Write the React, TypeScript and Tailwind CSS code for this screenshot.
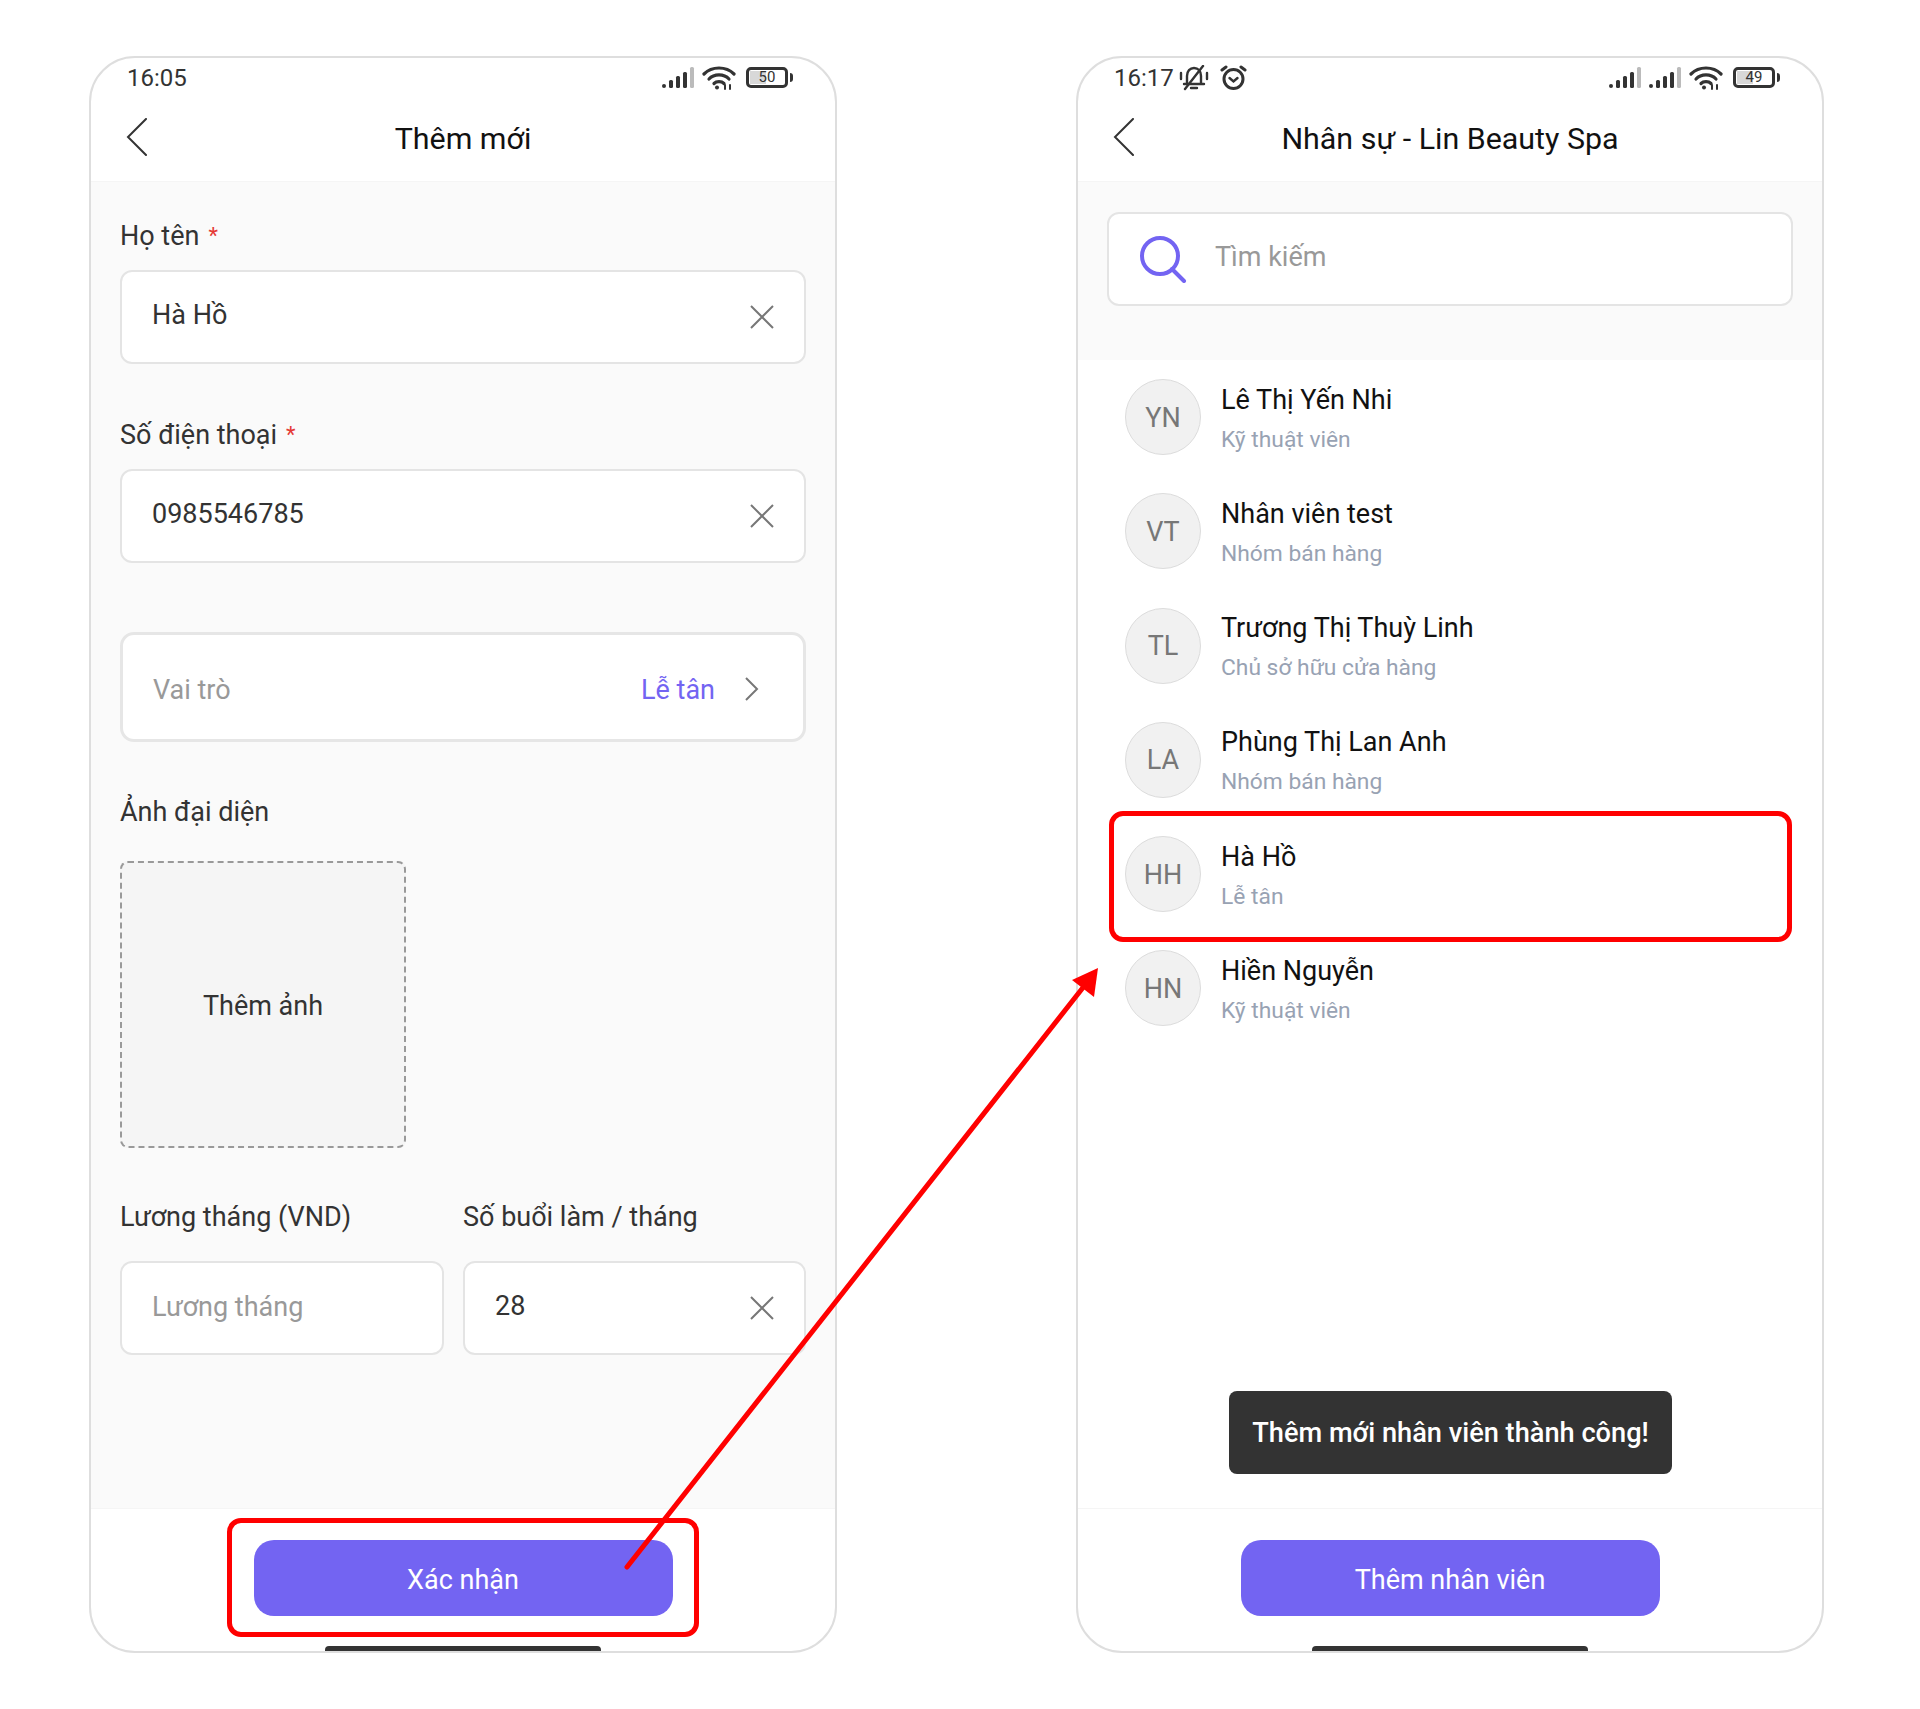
import type { ReactNode } from 'react'

const staff = [
  { code: 'YN', name: 'Lê Thị Yến Nhi', role: 'Kỹ thuật viên' },
  { code: 'VT', name: 'Nhân viên test', role: 'Nhóm bán hàng' },
  { code: 'TL', name: 'Trương Thị Thuỳ Linh', role: 'Chủ sở hữu cửa hàng' },
  { code: 'LA', name: 'Phùng Thị Lan Anh', role: 'Nhóm bán hàng' },
  { code: 'HH', name: 'Hà Hồ', role: 'Lễ tân' },
  { code: 'HN', name: 'Hiền Nguyễn', role: 'Kỹ thuật viên' },
]

function Signal() {
  return (
    <svg width="34" height="22" viewBox="0 0 34 22">
      <rect x="0" y="17" width="4" height="4" rx="2" fill="#333" />
      <rect x="7" y="13" width="4" height="8" rx="1.5" fill="#333" />
      <rect x="14" y="9" width="4" height="12" rx="1.5" fill="#333" />
      <rect x="21" y="5" width="4" height="16" rx="1.5" fill="#333" />
      <rect x="28" y="0" width="4" height="21" rx="1.5" fill="#bbb" />
    </svg>
  )
}

function Wifi() {
  return (
    <svg width="34" height="24" viewBox="0 0 34 24" fill="none" stroke="#333" strokeWidth="3.2" strokeLinecap="round">
      <path d="M2 8 C 10 0, 24 0, 32 8" />
      <path d="M7 13 C 12 7.5, 22 7.5, 27 13" />
      <path d="M12 17.5 C 14.5 15, 19.5 15, 22 17.5" />
      <circle cx="15" cy="21.5" r="2" fill="#333" stroke="none" />
      <path d="M23 23 V19 M28 23 V19" strokeWidth="2" />
    </svg>
  )
}

function Battery({ level }: { level: string }) {
  return (
    <div className="flex items-center">
      <div className="relative w-[42px] h-[21px] rounded-[5px] border-[3px] border-[#333] flex items-center justify-center bg-white">
        <div className="absolute left-[1px] top-[1px] bottom-[1px] w-[16px] bg-[#d8d8d8]" />
        <span className="relative text-[15px] leading-none text-[#333]">{level}</span>
      </div>
      <div className="w-[3px] h-[9px] ml-[2px] rounded-r-sm bg-[#333]" />
    </div>
  )
}

function StatusBar({ time, extras, signals }: { time: string; extras?: ReactNode; signals: number }) {
  return (
    <div className="h-[39px] pl-[36px] pr-[42px] flex items-center justify-between">
      <div className="flex items-center">
        <span className="text-[24px] leading-none text-[#333]">{time}</span>
        {extras}
      </div>
      <div className="flex items-center gap-[10px]">
        <div className="flex items-center gap-[6px]">
          <Signal />
          {signals > 1 && <Signal />}
          <Wifi />
        </div>
        <Battery level={signals > 1 ? '49' : '50'} />
      </div>
    </div>
  )
}

function Header({ title }: { title: string }) {
  return (
    <div className="h-[85px] relative flex items-center justify-center border-b border-[#f5f5f5]">
      <svg className="absolute left-[35px] top-[21px]" width="22" height="38" viewBox="0 0 22 38" fill="none" stroke="#333" strokeWidth="2" strokeLinecap="round">
        <path d="M20 1 L2 19 L20 37" />
      </svg>
      <span className="text-[30.4px] leading-none text-[#111]">{title}</span>
    </div>
  )
}

function Label({ children, required }: { children: ReactNode; required?: boolean }) {
  return (
    <div className="h-[36px] flex items-center text-[27px] text-[#333] leading-none">
      {children}
      {required && <span className="ml-[9px] text-[22px] text-[#e53935]">*</span>}
    </div>
  )
}

function CloseX() {
  return (
    <svg width="26" height="24" viewBox="0 0 26 24" stroke="#777" strokeWidth="2" fill="none">
      <path d="M2 1 L24 23 M24 1 L2 23" />
    </svg>
  )
}

function Field({ value, placeholder, clear, className }: { value?: string; placeholder?: string; clear?: boolean; className?: string }) {
  return (
    <div className={`h-[94px] rounded-[12px] border-2 border-[#e4e4e4] bg-white flex items-center justify-between pl-[30px] pr-[29px] text-[27px] leading-none ${className ?? ''}`}>
      <span className={value ? 'text-[#333] pb-[4px]' : 'text-[#999] pb-[2px]'}>{value ?? placeholder}</span>
      {clear && <CloseX />}
    </div>
  )
}

function PrimaryButton({ label }: { label: string }) {
  return (
    <div className="mx-auto mt-[31px] w-[419px] h-[76px] pt-[4px] rounded-[20px] bg-[#7364f2] flex items-center justify-center text-[27px] text-white">
      {label}
    </div>
  )
}

function Phone({ children }: { children: ReactNode }) {
  return (
    <div className="relative w-[748px] h-[1597px] rounded-[46px] border-2 border-[#dedede] bg-white overflow-hidden flex flex-col">
      {children}
      <div className="absolute bottom-0 left-[234px] w-[276px] h-[5px] rounded-t-[4px] bg-[#333]" />
    </div>
  )
}

function AddForm() {
  return (
    <Phone>
      <StatusBar time="16:05" signals={1} />
      <Header title="Thêm mới" />
      <div className="flex-1 bg-[#fafafa] px-[29px] pt-[36px]">
        <Label required>Họ tên</Label>
        <Field className="mt-[16px]" value="Hà Hồ" clear />
        <div className="mt-[53px]">
          <Label required>Số điện thoại</Label>
        </div>
        <Field className="mt-[16px]" value="0985546785" clear />
        <div className="mt-[69px] h-[110px] pt-[6px] rounded-[14px] border-[3px] border-[#e6e6e6] bg-white flex items-center pl-[30px] pr-[44px] text-[27px] leading-none">
          <span className="flex-1 text-[#999]">Vai trò</span>
          <span className="text-[#7364f2]">Lễ tân</span>
          <svg className="ml-[29px] -mt-[3px]" width="15" height="24" viewBox="0 0 15 24" fill="none" stroke="#777" strokeWidth="2">
            <path d="M2 1 L13 12 L2 23" />
          </svg>
        </div>
        <div className="mt-[52px]">
          <Label>Ảnh đại diện</Label>
        </div>
        <div className="mt-[31px] w-[286px] h-[287px] pt-[4px] rounded-[8px] border-2 border-dashed border-[#999] bg-[#f5f5f5] flex items-center justify-center text-[27px] leading-none text-[#333]">
          Thêm ảnh
        </div>
        <div className="mt-[51px] grid grid-cols-[324px_343px] gap-x-[19px]">
          <Label>Lương tháng (VND)</Label>
          <Label>Số buổi làm / tháng</Label>
          <Field className="mt-[26px]" placeholder="Lương tháng" />
          <Field className="mt-[26px]" value="28" clear />
        </div>
      </div>
      <div className="h-[143px] border-t border-[#f5f5f5]">
        <PrimaryButton label="Xác nhận" />
      </div>
    </Phone>
  )
}

function StaffList() {
  return (
    <Phone>
      <StatusBar
        time="16:17"
        signals={2}
        extras={
          <>
            <svg className="ml-[5px]" width="30" height="26" viewBox="0 0 30 26" fill="none" stroke="#333" strokeWidth="2.4" strokeLinecap="round">
              <path d="M8 19 V11 C8 6 11 3 15 3 C19 3 22 6 22 11 V19 Z M5 19 H25 M12 23 H18" />
              <path d="M6 24 L24 1" />
              <path d="M2 8 V14 M28 8 V14" />
            </svg>
            <svg className="ml-[11px]" width="27" height="26" viewBox="0 0 27 26" fill="none" stroke="#333" strokeWidth="3" strokeLinecap="round">
              <circle cx="13.5" cy="14" r="9.5" />
              <path d="M9.5 13 L13.5 16.5 L17.5 13" strokeWidth="2.4" />
              <path d="M2 5 L6 2 M25 5 L21 2" />
            </svg>
          </>
        }
      />
      <Header title="Nhân sự - Lin Beauty Spa" />
      <div className="h-[178px] bg-[#fafafa] px-[29px] pt-[30px]">
        <div className="h-[94px] rounded-[12px] border-2 border-[#e4e4e4] bg-white flex items-center pl-[30px]">
          <svg width="48" height="48" viewBox="0 0 48 48" fill="none" stroke="#7364f2" strokeWidth="4" strokeLinecap="round">
            <ellipse cx="21" cy="21" rx="18" ry="18" />
            <path d="M33 34 L45 46" />
          </svg>
          <span className="ml-[28px] pb-[4px] text-[27px] leading-none text-[#999]">Tìm kiếm</span>
        </div>
      </div>
      <div className="flex-1 pt-[19px] pl-[47px] flex flex-col">
        {staff.map((s) => (
          <div key={s.code} className="h-[114.3px] flex items-start">
            <div className="w-[76px] h-[76px] pt-[2px] rounded-full bg-[#f1f1f1] border border-[#dcdcdc] flex items-center justify-center text-[27px] leading-none text-[#777]">
              {s.code}
            </div>
            <div className="ml-[20px] mt-[2px]">
              <div className="h-[38px] flex items-center text-[27px] leading-none text-[#111]">{s.name}</div>
              <div className="mt-[2px] h-[38px] flex items-center text-[22.8px] leading-none text-[#98a2b3]">{s.role}</div>
            </div>
          </div>
        ))}
      </div>
      <div className="absolute left-[151px] top-[1333px] w-[443px] h-[83px] pt-[2px] rounded-[8px] bg-[#333] flex items-center justify-center text-[27.2px] leading-none font-medium text-white">
        Thêm mới nhân viên thành công!
      </div>
      <div className="h-[143px] border-t border-[#f5f5f5]">
        <PrimaryButton label="Thêm nhân viên" />
      </div>
    </Phone>
  )
}

export default function App() {
  return (
    <div className="relative w-[1920px] h-[1709px] bg-white overflow-hidden font-['Roboto',sans-serif]">
      <div className="flex gap-[239px] pl-[89px] pt-[56px]">
        <AddForm />
        <StaffList />
      </div>

      {/* red annotations */}
      <div className="absolute left-[227px] top-[1518px] w-[472px] h-[119px] rounded-[14px] border-[5px] border-[#ff0000]" />
      <div className="absolute left-[1109px] top-[811px] w-[683px] h-[131px] rounded-[14px] border-[5px] border-[#ff0000]" />
      <svg className="absolute left-0 top-0 pointer-events-none" width="1920" height="1709" viewBox="0 0 1920 1709">
        <path d="M627 1567 L1085 985" stroke="#ff0000" strokeWidth="5" strokeLinecap="round" fill="none" />
        <path d="M1098 968 L1072 980 L1094 997 Z" fill="#ff0000" />
      </svg>
    </div>
  )
}
